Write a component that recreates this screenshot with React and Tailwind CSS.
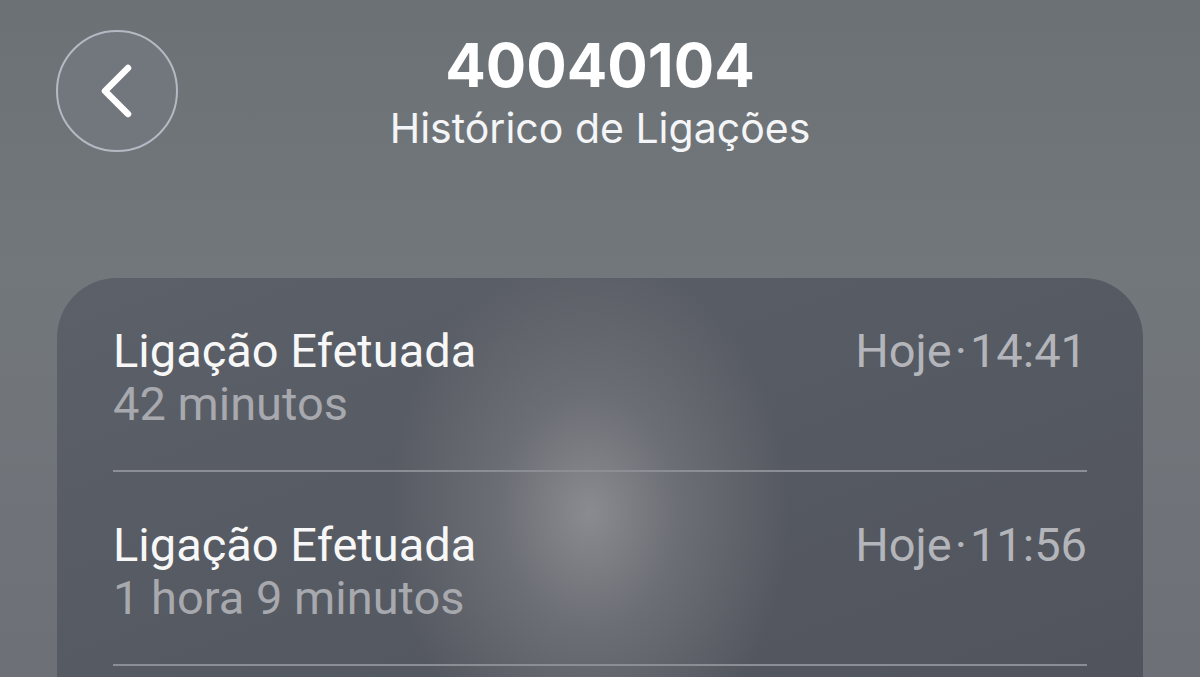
import React from 'react'

const calls = [
  { title: 'Ligação Efetuada', duration: '42 minutos', day: 'Hoje', time: '14:41' },
  { title: 'Ligação Efetuada', duration: '1 hora 9 minutos', day: 'Hoje', time: '11:56' },
]

const BackButton = () => (
  <button className="w-[122px] h-[122px] rounded-full border-2 border-[#b3bac4] bg-[#72777d] flex items-center justify-center">
    <svg width="40" height="56" viewBox="0 0 40 56" fill="none">
      <path d="M31 5 L8 28 L31 51" stroke="white" strokeWidth="6.5" strokeLinecap="round" strokeLinejoin="round" />
    </svg>
  </button>
)

const CallRow = ({ call }) => (
  <div className="flex justify-between items-start pt-[46px] pb-[40px] border-b-2 border-[#8b8e95]">
    <div className="flex flex-col">
      <span className="text-[47px] leading-[53px] text-[#f7f7f8]">{call.title}</span>
      <span className="text-[47px] leading-[53px] text-[#a7a9ae]">{call.duration}</span>
    </div>
    <span className="text-[47px] leading-[53px] text-[#b3b5ba]">
      {call.day}
      <span className="mx-[3px]">·</span>
      {call.time}
    </span>
  </div>
)

export default function App() {
  return (
    <div
      className="w-[1200px] h-[677px] overflow-hidden bg-[linear-gradient(180deg,#6c7176_0%,#72777c_40%,#6d7177_100%)]"
      style={{ fontFamily: 'Roboto, "Noto Sans", sans-serif' }}
    >
      <div className="grid grid-cols-[1fr_auto_1fr] px-[56px] pt-[30px]">
        <div className="justify-self-start">
          <BackButton />
        </div>
        <div className="flex flex-col items-center pt-[5px]" style={{ fontFamily: 'Inter, sans-serif' }}>
          <span className="text-[60px] leading-[60px] font-bold text-white">40040104</span>
          <span className="text-[41px] leading-[66px] text-[#f4f5f6]">Histórico de Ligações</span>
        </div>
        <div />
      </div>

      <div className="mx-[57px] mt-[117px] rounded-[60px] px-[56px] h-[520px] bg-[radial-gradient(ellipse_200px_260px_at_49%_45%,#8a8b90_0%,#6c6e75_45%,rgba(88,92,100,0)_100%),linear-gradient(160deg,#5c6068_0%,#555961_50%,#4f525b_100%)]">
        {calls.map((c, i) => (
          <CallRow key={i} call={c} />
        ))}
      </div>
    </div>
  )
}
